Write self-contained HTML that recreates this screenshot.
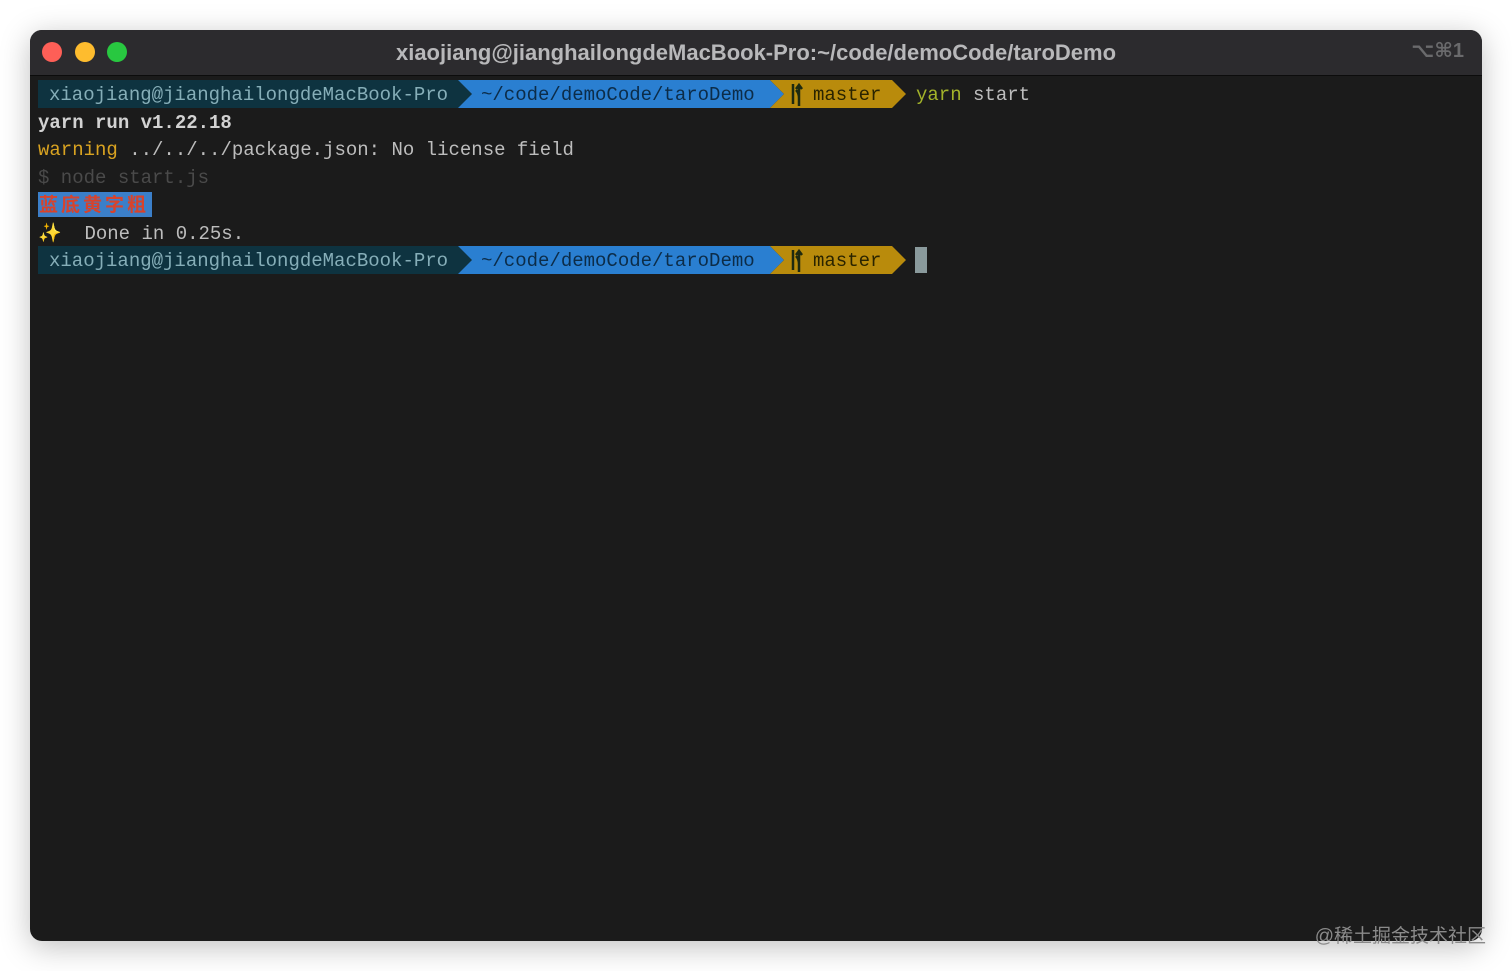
<!DOCTYPE html>
<html><head><meta charset="utf-8"><style>
html,body{margin:0;padding:0;background:#fff;width:1512px;height:971px;overflow:hidden}
.win{position:absolute;left:30px;top:30px;width:1452px;height:911px;border-radius:12px;background:#1b1b1b;overflow:hidden;box-shadow:0 6px 30px rgba(0,0,0,.25)}
.tb{position:absolute;left:0;top:0;width:100%;height:45px;background:#2c2b2e;border-bottom:1px solid #0c0c0c}
.dot{position:absolute;top:12px;width:20px;height:20px;border-radius:50%}
.title{position:absolute;left:0;right:0;top:10px;text-align:center;font:bold 22px "Liberation Sans",sans-serif;color:#b8b8ba}
.kb{position:absolute;right:18px;top:8px;font:bold 20px "Liberation Sans","DejaVu Sans",sans-serif;color:#6a6a6c}
.t{position:absolute;font-family:"Liberation Mono","Noto Sans CJK SC",monospace;font-size:19px;line-height:27.7px;white-space:pre;color:#bdbdbd;margin-top:2px}
.wm{position:absolute;right:26px;top:921px;font:19px "Liberation Sans","Noto Sans CJK SC",sans-serif;color:#8a8a8a}
</style></head><body>
<div class="win">
<div class="tb">
<div class="dot" style="left:12px;background:#fe5f57"></div>
<div class="dot" style="left:45px;background:#febc2e"></div>
<div class="dot" style="left:77px;background:#28c840"></div>
<div class="title">xiaojiang@jianghailongdeMacBook-Pro:~/code/demoCode/taroDemo</div>
<div class="kb">⌥⌘1</div>
</div>
</div>
<svg width="1512" height="971" style="position:absolute;left:0;top:0">
<g id="p1">
<polygon points="38,80 458,80 472,94 458,108 38,108" fill="#0e3340"/>
<polygon points="458,80 770,80 784,94 770,108 458,108 472,94" fill="#2a7fd1"/>
<polygon points="770,80 892,80 906,94 892,108 770,108 784,94" fill="#b98b0c"/>
</g>
<use href="#p1" y="166"/>
<rect x="38" y="192" width="114" height="25" fill="#3b7fc9"/>
<rect x="915" y="247" width="12" height="26" fill="#8a9a9c"/>
<g stroke="#1e2a10" stroke-width="2.5" fill="none">
<path d="M793,84 V104 M799,106 V98 Q799,93 796,90 M799,98 V86 M796,89 L799,85 L802,89"/>
<path d="M793,250 V270 M799,272 V264 Q799,259 796,256 M799,264 V252 M796,255 L799,251 L802,255"/>
</g>
</svg>
<div class="t" style="left:49px;top:80px;color:#86aeb8">xiaojiang@jianghailongdeMacBook-Pro</div>
<div class="t" style="left:481px;top:80px;color:#0c2c48">~/code/demoCode/taroDemo</div>
<div class="t" style="left:813px;top:80px;color:#2a2400">master</div>
<div class="t" style="left:916px;top:80px"><span style="color:#a3b32a">yarn</span> start</div>
<div class="t" style="left:38px;top:107.7px;font-weight:bold;color:#d2d2d2">yarn run v1.22.18</div>
<div class="t" style="left:38px;top:135.4px"><span style="color:#d9a321">warning</span> ../../../package.json: No license field</div>
<div class="t" style="left:38px;top:163.1px;color:#4a4a4a">$ node start.js</div>
<div class="t" style="left:39px;top:190.8px;color:#d8432c;font-weight:bold;letter-spacing:3px">蓝底黄字粗</div>
<div class="t" style="left:38px;top:218.5px"><span style="color:#f3d24a">✨</span>  Done in 0.25s.</div>
<div class="t" style="left:49px;top:246px;color:#86aeb8">xiaojiang@jianghailongdeMacBook-Pro</div>
<div class="t" style="left:481px;top:246px;color:#0c2c48">~/code/demoCode/taroDemo</div>
<div class="t" style="left:813px;top:246px;color:#2a2400">master</div>
<div class="wm">@稀土掘金技术社区</div>
</body></html>
